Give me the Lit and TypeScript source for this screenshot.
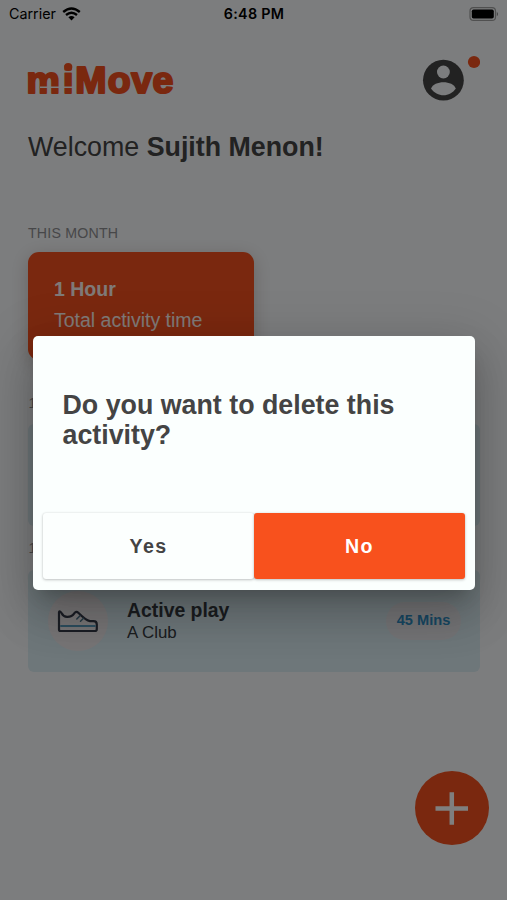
import { LitElement, html, css, svg } from "lit";
import { customElement, property } from "lit/decorators.js";

const shoe = svg`
  <path d="M3 3.200V20.500Q3 22 4.500 22H39Q40.800 22 40.800 20.300V15.500Q40.800 12.200 37.500 12.200H34Q30 11.500 22.300 3.800Q20.300 1.800 18.400 4.100Q15.800 8.100 11 7.900Q7.300 7.700 5.500 4Q3.800 1.300 3 3.200Z" fill="none" stroke="#353a48" stroke-width="2.200" stroke-linejoin="round"/>
  <path d="M4.200 17H39.600" stroke="#5b9dbd" stroke-width="2"/>
  <path d="M20.800 10L24 6.800M24.500 12.300L27.500 9.300" stroke="#4a7287" stroke-width="1.500" stroke-linecap="round"/>`;

@customElement("activity-card")
class ActivityCard extends LitElement {
  @property() name = "";
  @property() place = "";
  @property() time = "";
  static styles = css`
    :host { display: block; }
    .card { height: 102px; box-sizing: border-box; display: flex; align-items: center; padding: 0 19px 0 20px; background: #dceef4; border-radius: 6px; }
    .icon { width: 60px; height: 60px; border-radius: 50%; background: #eeeaed; display: flex; align-items: center; justify-content: center; flex: none; }
    .info { margin-left: 19px; flex: 1; color: #363a40; }
    .name { font-weight: 700; font-size: 19.400px; line-height: 24px; }
    .place { font-size: 16.900px; line-height: 22px; }
    .time { width: 75px; height: 38px; border-radius: 19px; background: #e9e9ed; color: #2f8fc5; font-weight: 700; font-size: 14.600px; line-height: 37px; text-align: center; }
  `;
  render() {
    return html`<div class="card">
      <div class="icon"><svg width="44" height="25" viewBox="0 0 44 25">${shoe}</svg></div>
      <div class="info"><div class="name">${this.name}</div><div class="place">${this.place}</div></div>
      <div class="time">${this.time}</div>
    </div>`;
  }
}

@customElement("app-root")
class AppRoot extends LitElement {
  static styles = css`
    :host { display: block; position: relative; width: 507px; height: 900px; overflow: hidden; background: #f9fbfd; color: #444; font-family: "Liberation Sans", Arial, sans-serif; }
    .status { display: grid; grid-template-columns: 1fr auto 1fr; align-items: center; height: 27px; padding: 0 8px 0 9px; font-family: Inter, sans-serif; font-size: 14.300px; color: #000; }
    .carrier { display: flex; align-items: center; gap: 6px; }
    .clock { font-weight: 600; letter-spacing: 0.300px; }
    .battery { justify-self: end; display: block; }
    .page { padding: 0 27px 0 28px; }
    .top { height: 104px; display: flex; justify-content: space-between; }
    .logo { margin: 33px 0 0 -2px; overflow: visible; }
    .account { margin-top: 27px; display: block; }
    .welcome { font-size: 26.800px; line-height: 32px; white-space: nowrap; }
    .month { margin-top: 62px; font-size: 14.200px; line-height: 17px; color: #8f8f92; letter-spacing: 0.200px; }
    .total { margin-top: 10px; width: 226px; height: 108px; box-sizing: border-box; padding: 24px 26px; border-radius: 11px; background: #f4511e; color: #fff4f0; box-shadow: 0 4px 18px rgba(80, 50, 30, 0.25); font-size: 19.500px; line-height: 26px; }
    .total div + div { margin-top: 5px; }
    .day { font-size: 14.200px; line-height: 18px; color: #8f8f92; text-indent: 0.500px; }
    .day.first { margin-top: 34px; margin-bottom: 12px; }
    .day.next { margin-top: 13px; margin-bottom: 13px; }
    .fab { position: absolute; left: 415px; top: 771px; width: 74px; height: 74px; border-radius: 50%; background: #f4511e; }
    .fab svg { display: block; }
    .scrim { position: absolute; inset: 0; background: rgba(0, 0, 0, 0.5); display: flex; justify-content: center; align-items: flex-start; }
    .dialog { margin: 335.500px 0 0 1px; width: 442px; height: 254px; box-sizing: border-box; display: flex; flex-direction: column; justify-content: space-between; padding: 0 10px 10.500px 10px; border-radius: 5px; background: #fbfffe; box-shadow: 0 12px 17px -8px rgba(0,0,0,.2), 0 27px 43px 3px rgba(0,0,0,.14), 0 10px 52px 9px rgba(0,0,0,.12); }
    .question { margin: 54.500px 0 0 19.500px; font-weight: 700; font-size: 26.800px; line-height: 30px; }
    .actions { display: grid; grid-template-columns: 1fr 1fr; }
    .btn { height: 66px; border: 0; padding: 0; border-radius: 3px; background: #fcfffe; color: #444; font: 700 19.600px/66px "Liberation Sans", Arial, sans-serif; letter-spacing: 1.400px; text-align: center; box-shadow: 0 1px 3px rgba(0,0,0,.22), 0 0 2px rgba(0,0,0,.1); }
    .btn.no { background: #f8511d; color: #fff; }
  `;
  render() {
    return html`
      <div class="status">
        <div class="carrier"><span>Carrier</span>
          <svg width="19" height="14" viewBox="0 0 19 14"><g fill="none" stroke="#000" stroke-width="2.400"><path d="M1.200 5Q9.500 -2 17.800 5"/><path d="M4 8Q9.500 3.500 15 8"/></g><path d="M6.400 10.200Q9.500 7.800 12.600 10.200L9.500 13.500Z"/></svg>
        </div>
        <span class="clock">6:48 PM</span>
        <svg class="battery" width="30" height="14" viewBox="0 0 30 14"><rect x="1" y="0.600" width="25.500" height="12.800" rx="3.500" fill="none" stroke="#a0a0a0" stroke-width="1.200"/><rect x="2.800" y="2.500" width="22" height="9" rx="1.700"/><path d="M27.800 4.700Q30.300 7 27.800 9.300Z" fill="#8a8a8a"/></svg>
      </div>
      <div class="page">
        <div class="top">
          <svg class="logo" width="152" height="38" viewBox="26 60 152 38">
            <g font-family="Liberation Sans, sans-serif" font-weight="700" font-size="37.500" fill="#f4511e" stroke="#f4511e" stroke-width="2.200" stroke-linejoin="round">
              <text x="26.400 62.900 75.200 107.700 131.300 152.600" y="92.800">miMove</text>
            </g>
            <path d="M40 87.300H73.500M63 71.600H73.500" stroke="#f9fbfd" stroke-width="1.600"/>
            <circle cx="68.200" cy="67" r="4.100" fill="#f4511e"/>
          </svg>
          <svg class="account" width="64" height="52" viewBox="416 54 64 52"><circle cx="443.400" cy="80.200" r="20.400" fill="#444"/><circle cx="443.400" cy="72" r="6.400" fill="#f9fbfd"/><path d="M431 88.500C434 80 453 80 455.800 88.500C450 97.500 437 97.500 431 88.500Z" fill="#f9fbfd"/><circle cx="474" cy="62" r="6.100" fill="#f4511e"/></svg>
        </div>
        <div class="welcome">Welcome <b>Sujith Menon!</b></div>
        <div class="month">THIS MONTH</div>
        <div class="total"><div><b>1 Hour</b></div><div>Total activity time</div></div>
        <div class="day first">1</div>
        <activity-card></activity-card>
        <div class="day next">1</div>
        <activity-card name="Active play" place="A Club" time="45 Mins"></activity-card>
      </div>
      <div class="fab"><svg width="74" height="74" viewBox="0 0 74 74"><path d="M20.500 37.500H53M36.800 21.200V53.700" stroke="#fff" stroke-width="4.500"/></svg></div>
      <div class="scrim">
        <div class="dialog">
          <div class="question">Do you want to delete this activity?</div>
          <div class="actions"><button class="btn">Yes</button><button class="btn no">No</button></div>
        </div>
      </div>`;
  }
}
